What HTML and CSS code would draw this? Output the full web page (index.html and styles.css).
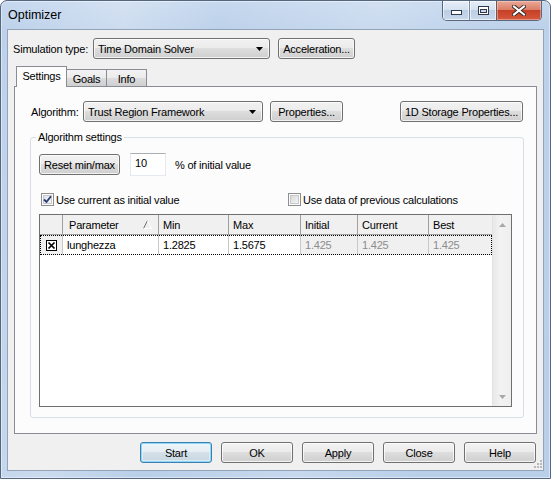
FILE: index.html
```html
<!DOCTYPE html>
<html>
<head>
<meta charset="utf-8">
<title>Optimizer</title>
<link rel="stylesheet" href="styles.css">
</head>
<body>
<div class="window">
  <div class="titlebar">
    <span class="title">Optimizer</span>
    <div class="caption">
      <div class="cbtn cmin"><svg width="11" height="5" viewBox="0 0 11 5"><rect x="0.5" y="0.5" width="10" height="4" fill="#fff" stroke="#2f3a4e"/></svg></div>
      <div class="cbtn cmax"><svg width="11" height="9" viewBox="0 0 11 9"><rect x="0.5" y="0.5" width="10" height="8" fill="#fff" stroke="#2f3a4e"/><rect x="2.5" y="3.5" width="6" height="3" fill="#c9d7e9" stroke="#2f3a4e"/></svg></div>
      <div class="cbtn cclose"><svg width="14" height="11" viewBox="0 0 14 11"><path d="M2 1.5 L12 9.5 M12 1.5 L2 9.5" stroke="#3b2a28" stroke-width="4" stroke-linecap="square"/><path d="M2 1.5 L12 9.5 M12 1.5 L2 9.5" stroke="#fff" stroke-width="2" stroke-linecap="square"/></svg></div>
    </div>
  </div>
  <div class="client">
    <div class="toprow">
      <span class="lbl lbl-sim">Simulation type:</span>
      <div class="combo combo-sim"><span>Time Domain Solver</span><svg class="arrow" width="7" height="4" viewBox="0 0 7 4"><path d="M0 0 H7 L3.5 4 Z" fill="#000"/></svg></div>
      <div class="btn btn-accel">Acceleration...</div>
    </div>
    <div class="tabs">
      <div class="tab tab-sel">Settings</div>
      <div class="tab tab-goals">Goals</div>
      <div class="tab tab-info">Info</div>
    </div>
    <div class="panel">
      <div class="algrow">
        <span class="lbl lbl-alg">Algorithm:</span>
        <div class="combo combo-alg"><span>Trust Region Framework</span><svg class="arrow" width="7" height="4" viewBox="0 0 7 4"><path d="M0 0 H7 L3.5 4 Z" fill="#000"/></svg></div>
        <div class="btn btn-props">Properties...</div>
        <div class="btn btn-storage">1D Storage Properties...</div>
      </div>
      <div class="group">
        <span class="legend">Algorithm settings</span>
        <div class="resetrow">
          <div class="btn btn-reset">Reset min/max</div>
          <div class="textbox">10</div>
          <span class="lbl lbl-pct">% of initial value</span>
        </div>
        <div class="cbrow">
          <div class="cbitem cbitem-first">
            <span class="cb cb-on"><svg width="9" height="9" viewBox="0 0 9 9"><path d="M1 4.5 L3.5 7 L8 1.2" fill="none" stroke="#2b3b6e" stroke-width="1.8"/></svg></span>
            <span class="cblabel">Use current as initial value</span>
          </div>
          <div class="cbitem">
            <span class="cb"></span>
            <span class="cblabel">Use data of previous calculations</span>
          </div>
        </div>
        <div class="grid">
          <div class="gmain">
            <div class="grow ghead">
              <div class="gc c0"></div>
              <div class="gc c1"><span>Parameter</span><svg class="sort" width="9" height="9" viewBox="0 0 9 9"><path d="M0.5 8.5 L4.5 0.5" stroke="#6d6d6d" fill="none"/><path d="M4.5 0.5 L8.5 8.5 L0.5 8.5" stroke="#ffffff" fill="none"/></svg></div>
              <div class="gc c2">Min</div>
              <div class="gc c3">Max</div>
              <div class="gc c4">Initial</div>
              <div class="gc c5">Current</div>
              <div class="gc c6">Best</div>
            </div>
            <div class="grow gdata">
              <div class="gc c0 fixed"><svg width="11" height="11" viewBox="0 0 11 11"><rect x="0.5" y="0.5" width="10" height="10" fill="#fff" stroke="#000"/><path d="M2.5 2.5 L8.5 8.5 M8.5 2.5 L2.5 8.5" stroke="#000" stroke-width="1.7"/></svg></div>
              <div class="gc c1">lunghezza</div>
              <div class="gc c2">1.2825</div>
              <div class="gc c3">1.5675</div>
              <div class="gc c4 ro">1.425</div>
              <div class="gc c5 ro">1.425</div>
              <div class="gc c6 ro">1.425</div>
            </div>
          </div>
          <div class="vscroll">
            <svg width="7" height="4" viewBox="0 0 7 4"><path d="M0 4 H7 L3.5 0 Z" fill="#a8a8a8"/></svg>
            <svg width="7" height="4" viewBox="0 0 7 4"><path d="M0 0 H7 L3.5 4 Z" fill="#a8a8a8"/></svg>
          </div>
        </div>
      </div>
    </div>
    <div class="bottom">
      <div class="btn btn-bottom btn-default">Start</div>
      <div class="btn btn-bottom">OK</div>
      <div class="btn btn-bottom">Apply</div>
      <div class="btn btn-bottom">Close</div>
      <div class="btn btn-bottom">Help</div>
    </div>
    <svg class="grip" width="11" height="11" viewBox="0 0 11 11">
      <g fill="#b9b9b9"><rect x="8" y="1" width="2" height="2"/><rect x="5" y="4" width="2" height="2"/><rect x="8" y="4" width="2" height="2"/><rect x="2" y="7" width="2" height="2"/><rect x="5" y="7" width="2" height="2"/><rect x="8" y="7" width="2" height="2"/></g>
    </svg>
  </div>
</div>
</body>
</html>
```
FILE: styles.css
```css
* { box-sizing: border-box; }
html, body { margin: 0; padding: 0; }
body {
  width: 551px;
  height: 479px;
  overflow: hidden;
  background: #ffffff;
  font-family: "Liberation Sans", Arial, sans-serif;
  font-size: 11px;
  letter-spacing: -0.2px;
  color: #000;
}
.window {
  width: 551px;
  height: 479px;
  border: 1px solid #55667f;
  border-radius: 7px 7px 0 0;
  background:
    linear-gradient(100deg, rgba(255,255,255,0) 0%, rgba(255,255,255,0.25) 20%, rgba(255,255,255,0) 35%, rgba(255,255,255,0.2) 60%, rgba(255,255,255,0) 80%),
    linear-gradient(to bottom, #c6d8ee 0px, #bcd1ea 30px, #b9cfe9 100%);
  box-shadow: inset 0 0 0 1px rgba(255,255,255,0.45);
  padding: 0 6px 7px 6px;
  display: flex;
  flex-direction: column;
}
.titlebar {
  height: 28px;
  display: flex;
  justify-content: space-between;
  align-items: flex-start;
}
.title {
  font-size: 12.5px;
  letter-spacing: 0;
  line-height: 15px;
  margin: 7px 0 0 1px;
  color: #000;
}
.caption {
  display: flex;
  height: 20px;
  margin-right: 2px;
  border: 1px solid #5a677c;
  border-top: none;
  border-radius: 0 0 5px 5px;
  overflow: hidden;
}
.cbtn {
  display: flex;
  align-items: center;
  justify-content: center;
  height: 19px;
}
.cmin, .cmax {
  width: 27px;
  background: linear-gradient(to bottom, #e6eef8 0%, #d5e2f1 45%, #bccee4 50%, #c9d9ec 100%);
  box-shadow: inset 0 0 0 1px rgba(255,255,255,0.6);
}
.cmin { border-right: 1px solid #7d8ca3; padding-top: 4px; }
.cmax { border-right: 1px solid #6a5a5a; }
.cclose {
  width: 44px;
  background: linear-gradient(to bottom, #e9a998 0%, #dc7f68 45%, #c63f26 50%, #d5593d 100%);
  box-shadow: inset 0 0 0 1px rgba(255,220,210,0.45);
}
.client {
  flex: 1;
  position: relative;
  border: 1px solid #93a4b9;
  background: #f0f0f0;
  display: flex;
  flex-direction: column;
}
.toprow {
  display: flex;
  align-items: center;
  height: 21px;
  margin-top: 8px;
  padding-left: 5px;
}
.lbl { white-space: nowrap; }
.lbl-sim { width: 80px; }
.btn, .combo {
  height: 21px;
  border: 1px solid #707070;
  border-radius: 3px;
  background: linear-gradient(to bottom, #f2f2f2 0%, #ebebeb 49%, #dddddd 50%, #cfcfcf 100%);
  box-shadow: inset 0 0 0 1px rgba(255,255,255,0.75);
  display: flex;
  align-items: center;
  white-space: nowrap;
}
.btn { justify-content: center; }
.combo { padding-left: 4px; }
.combo .arrow { margin-left: auto; margin-right: 6px; }
.combo-sim { width: 177px; }
.btn-accel { width: 77px; margin-left: 8px; }

.tabs {
  display: flex;
  align-items: flex-end;
  height: 20px;
  margin: 7px 0 0 8px;
}
.tab {
  height: 17px;
  border: 1px solid #898c95;
  border-bottom: none;
  background: linear-gradient(to bottom, #f3f3f3 0%, #ebebeb 49%, #dddddd 50%, #cfcfcf 100%);
  display: flex;
  align-items: center;
  justify-content: center;
  padding-top: 1px;
}
.tab-sel {
  height: 21px;
  width: 51px;
  margin-bottom: -1px;
  background: #fcfcfc;
  position: relative;
  z-index: 1;
  padding-bottom: 3px;
}
.tab-goals { width: 41px; margin-left: -1px; }
.tab-info { width: 41px; margin-left: -1px; }

.panel {
  margin: 0 6px;
  height: 348px;
  border: 1px solid #898c95;
  background: #fcfcfc;
}
.algrow {
  display: flex;
  align-items: center;
  height: 21px;
  margin-top: 14px;
  padding-left: 16px;
  padding-right: 13px;
}
.lbl-alg { width: 52px; }
.combo-alg { width: 180px; }
.btn-props { width: 73px; margin-left: 7px; }
.btn-storage { width: 123px; margin-left: auto; }

.group {
  margin: 15px 12px 0 15px;
  height: 281px;
  border: 1px solid #d5dfe5;
  border-radius: 3px;
}
.legend {
  display: block;
  width: fit-content;
  margin: -7px 0 0 5px;
  padding: 0 2px;
  line-height: 13px;
  background: #fcfcfc;
}
.resetrow {
  display: flex;
  align-items: center;
  height: 23px;
  margin-top: 9px;
  padding-left: 8px;
}
.btn-reset { width: 81px; }
.textbox {
  width: 36px;
  height: 23px;
  margin-left: 10px;
  background: #fff;
  border: 1px solid #e3e9ef;
  border-top-color: #abadb3;
  padding: 3px 0 0 4px;
  line-height: 13px;
}
.lbl-pct { margin-left: 9px; }
.cbrow {
  display: flex;
  align-items: center;
  height: 13px;
  margin-top: 17px;
  padding-left: 10px;
}
.cbitem { display: flex; align-items: center; }
.cbitem-first { width: 247px; }
.cb {
  width: 13px;
  height: 13px;
  border: 1px solid #8e8f8f;
  background: #f6f6f6;
  padding: 1px;
  display: flex;
  align-items: center;
  justify-content: center;
  box-shadow: inset 0 0 0 1px #fbfbfb, inset 0 0 0 2px #c9c9c9;
  background-image: linear-gradient(135deg, #d6d6d6, #f8f8f8);
  background-origin: content-box;
  background-clip: content-box;
}
.cb-on {
  background-image: linear-gradient(135deg, #d9e1ee, #f6f8fb);
}
.cb svg { display: block; }
.cblabel { margin-left: 2px; white-space: nowrap; }

.grid {
  margin: 8px 0 0 8px;
  width: 473px;
  height: 193px;
  border: 1px solid #6f6f6f;
  background: #fff;
  display: flex;
}
.gmain { width: 452px; }
.grow { display: flex; height: 20px; }
.ghead {
  background: #f0f0f0;
  border-bottom: 1px solid #a0a0a0;
}
.gdata {
  outline: 1px dotted #000;
  outline-offset: -1px;
}
.gc {
  height: 100%;
  display: flex;
  align-items: center;
  padding-left: 4px;
  border-right: 1px solid #a0a0a0;
  white-space: nowrap;
}
.gdata .gc { border-right-color: #c8c8c8; }
.c0 { width: 23px; justify-content: center; padding-left: 0; }
.c1 { width: 96px; }
.ghead .c1 { padding-left: 6px; }
.c2 { width: 70px; }
.c3 { width: 72px; }
.c4 { width: 57px; }
.c5 { width: 71px; }
.c6 { width: 63px; border-right: none; }
.fixed { background: #f0f0f0; }
.ro { background: #f0f0f0; color: #8d8d8d; }
.sort { margin-left: auto; margin-right: 6px; }
.vscroll {
  flex: 1;
  background: linear-gradient(to right, #e8e8e8, #f2f2f2 40%, #efefef);
  border-left: 1px solid #e2e2e2;
  display: flex;
  flex-direction: column;
  justify-content: space-between;
  align-items: center;
  padding: 8px 0 7px 0;
}
.bottom {
  display: flex;
  justify-content: flex-end;
  gap: 9px;
  margin-top: 8px;
  padding-right: 7px;
}
.btn-bottom { width: 72px; }
.btn-default {
  border-color: #3c7fb1;
  background: linear-gradient(to bottom, #eef4f8 0%, #e6eef3 49%, #d5e1e9 50%, #c7d6e0 100%);
  box-shadow: inset 0 0 0 1px #8fd6f7, inset 0 0 0 2px rgba(230,246,253,0.6);
}
.grip {
  position: absolute;
  right: 0;
  bottom: 0;
}
```
